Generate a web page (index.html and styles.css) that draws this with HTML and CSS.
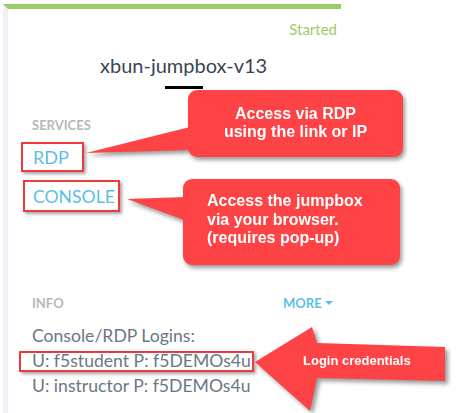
FILE: index.html
```html
<!DOCTYPE html>
<html>
<head>
<meta charset="utf-8">
<link rel="stylesheet" href="styles.css">
</head>
<body>
<div class="panel">
  <div class="status">Started</div>
  <div class="title">xbun-jumpbox-v13</div>
  <div class="tabbar"></div>
  <div class="content">
    <div class="label">SERVICES</div>
    <div class="svc svc-rdp"><a class="link">RDP</a></div>
    <div class="svc svc-console"><a class="link">CONSOLE</a></div>
    <div class="info-head">
      <span class="label">INFO</span>
      <span class="more">MORE<span class="caret"></span></span>
    </div>
    <div class="info">
      <div class="line">Console/RDP Logins:</div>
      <div class="line"><span class="marked">U: f5student P: f5DEMOs4u</span></div>
      <div class="line">U: instructor P: f5DEMOs4u</div>
    </div>
  </div>
</div>

<div class="callout callout-rdp">
  <div class="bubble bubble-center">Access via RDP<br>using the link or IP</div>
</div>
<div class="callout callout-console">
  <div class="bubble bubble-left">Access the jumpbox<br>via your browser.<br>(requires pop-up)</div>
</div>

<div class="arrow">
  <svg class="arrow-shape" width="457" height="413" viewBox="0 0 457 413">
    <polygon points="255,362 312,327 317,343 445,347 445,381 317,378 310,411" fill="#fd4346"/>
  </svg>
  <div class="arrow-text">Login credentials</div>
</div>
</body>
</html>
```

FILE: styles.css
```css
html, body {
  margin: 0;
  padding: 0;
  background: #ffffff;
}
body {
  width: 457px;
  height: 413px;
  overflow: hidden;
  position: relative;
  font-family: Lato, "Open Sans", sans-serif;
}
.panel {
  margin: 4px 0 0 3px;
  width: 338px;
  height: 409px;
  border-top: 5px solid #9ccc65;
  border-left: 5px solid #eef2f7;
  box-sizing: border-box;
}
.status {
  margin-top: 11px;
  text-align: right;
  padding-right: 4px;
  font-size: 15px;
  line-height: 18px;
  color: #9ccc65;
}
.title {
  margin-top: 16px;
  padding-left: 92px;
  font-size: 20px;
  line-height: 22px;
  color: #3b4552;
}
.tabbar {
  margin: 10px 0 0 157px;
  width: 38px;
  height: 3px;
  background: #000000;
}
.content {
  padding-left: 24px;
}
.label {
  display: block;
  margin-top: 28px;
  font-size: 13px;
  line-height: 16px;
  font-weight: 700;
  color: #b8b8b8;
}
.svc {
  display: flex;
}
.link {
  display: block;
  box-sizing: border-box;
  border: 2px solid #f0393f;
  box-shadow: 2px 2px 3px rgba(0,0,0,0.35);
  font-size: 18px;
  line-height: 26px;
  color: #5bbfe6;
}
.svc-rdp {
  margin-top: 9px;
}
.svc-rdp .link {
  margin-left: -11px;
  width: 63px;
  height: 30px;
  padding-left: 10px;
}
.svc-console {
  margin-top: 8px;
}
.svc-console .link {
  margin-left: -9px;
  width: 97px;
  height: 32px;
  padding: 2px 0 0 8px;
  font-size: 17.6px;
}
.info-head {
  margin-top: 83px;
  display: flex;
  align-items: baseline;
}
.info-head .label {
  margin-top: 0;
  width: 251px;
}
.more {
  font-size: 13px;
  line-height: 16px;
  font-weight: 700;
  color: #5bbfe6;
  display: flex;
  align-items: center;
}
.caret {
  margin-left: 3px;
  width: 0;
  height: 0;
  border-left: 4.5px solid transparent;
  border-right: 4.5px solid transparent;
  border-top: 4px solid #5bbfe6;
}
.info {
  margin-top: 12px;
  font-size: 17.6px;
  line-height: 25px;
  color: #6b7785;
}
.marked {
  position: relative;
}
.marked::after {
  content: "";
  position: absolute;
  left: -13px;
  right: -3px;
  top: 1px;
  bottom: -1px;
  border: 2px solid #f0393f;
  box-shadow: 2px 2px 3px rgba(0,0,0,0.35);
}
.callout {
  position: absolute;
  filter: drop-shadow(2px 3px 2px rgba(0,0,0,0.4));
}
.callout::before {
  content: "";
  position: absolute;
  background: #fd4346;
}
.bubble {
  position: relative;
  box-sizing: border-box;
  height: 100%;
  background: #fd4346;
  border-radius: 9px;
  color: #ffffff;
  font-family: "Liberation Sans", Arial, sans-serif;
  font-weight: 700;
  font-size: 16px;
}
.callout-rdp {
  left: 188px;
  top: 90px;
  width: 215px;
  height: 67px;
}
.callout-rdp::before {
  left: -102px;
  top: 37px;
  width: 106px;
  height: 26px;
  clip-path: polygon(0px 26px, 104px 0px, 104px 23px);
}
.bubble-center {
  text-align: center;
  padding-top: 15px;
  line-height: 18px;
}
.callout-console {
  left: 183px;
  top: 179px;
  width: 217px;
  height: 86px;
}
.callout-console::before {
  left: -56px;
  top: 18px;
  width: 60px;
  height: 24px;
  clip-path: polygon(0px 2px, 60px 0px, 60px 24px);
}
.bubble-left {
  padding: 13px 0 0 24px;
  line-height: 18.5px;
}
.arrow {
  position: absolute;
  left: 0;
  top: 0;
  width: 457px;
  height: 413px;
  filter: drop-shadow(3px 3px 2px rgba(0,0,0,0.4));
}
.arrow-shape {
  display: block;
}
.arrow-text {
  position: absolute;
  left: 303px;
  top: 352px;
  line-height: 18px;
  font-family: "Liberation Sans", Arial, sans-serif;
  font-weight: 700;
  font-size: 13px;
  color: #ffffff;
  white-space: nowrap;
}
```
